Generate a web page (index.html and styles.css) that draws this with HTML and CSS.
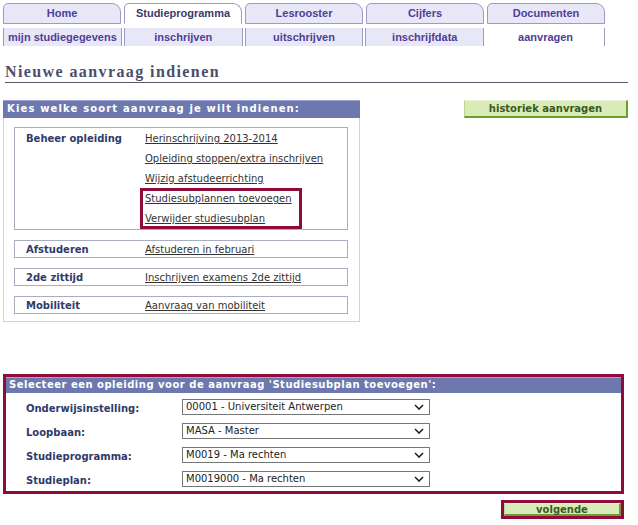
FILE: index.html
```html
<!DOCTYPE html>
<html>
<head>
<meta charset="utf-8">
<link rel="stylesheet" href="styles.css">
</head>
<body>
<nav class="tabs">
  <div class="tab">Home</div>
  <div class="tab active">Studieprogramma</div>
  <div class="tab">Lesrooster</div>
  <div class="tab">Cijfers</div>
  <div class="tab">Documenten</div>
</nav>
<nav class="subtabs">
  <div class="subtab">mijn studiegegevens</div>
  <div class="subtab">inschrijven</div>
  <div class="subtab">uitschrijven</div>
  <div class="subtab">inschrijfdata</div>
  <div class="subtab active">aanvragen</div>
</nav>

<h1 class="title">Nieuwe aanvraag indienen</h1>

<div class="content">
  <section class="panel">
    <div class="bar">Kies welke soort aanvraag je wilt indienen:</div>
    <div class="panel-body">
      <div class="group multi">
        <div class="label">Beheer opleiding</div>
        <div class="links">
          <a href="#">Herinschrijving 2013-2014</a>
          <a href="#">Opleiding stoppen/extra inschrijven</a>
          <a href="#">Wijzig afstudeerrichting</a>
          <a href="#">Studiesubplannen toevoegen</a>
          <a href="#">Verwijder studiesubplan</a>
        </div>
        <span class="highlight"></span>
      </div>
      <div class="group single">
        <div class="label">Afstuderen</div>
        <div class="links"><a href="#">Afstuderen in februari</a></div>
      </div>
      <div class="group single">
        <div class="label">2de zittijd</div>
        <div class="links"><a href="#">Inschrijven examens 2de zittijd</a></div>
      </div>
      <div class="group single">
        <div class="label">Mobiliteit</div>
        <div class="links"><a href="#">Aanvraag van mobiliteit</a></div>
      </div>
    </div>
  </section>
  <div class="btn history">historiek aanvragen</div>
</div>

<section class="select-panel">
  <div class="bar small">Selecteer een opleiding voor de aanvraag 'Studiesubplan toevoegen':</div>
  <div class="form">
    <div class="row">
      <div class="flabel">Onderwijsinstelling:</div>
      <div class="select"><span>00001 - Universiteit Antwerpen</span><svg width="10" height="6" viewBox="0 0 10 6"><path d="M1 1 L5 5 L9 1" fill="none" stroke="#222" stroke-width="1.6"/></svg></div>
    </div>
    <div class="row">
      <div class="flabel">Loopbaan:</div>
      <div class="select"><span>MASA - Master</span><svg width="10" height="6" viewBox="0 0 10 6"><path d="M1 1 L5 5 L9 1" fill="none" stroke="#222" stroke-width="1.6"/></svg></div>
    </div>
    <div class="row">
      <div class="flabel">Studieprogramma:</div>
      <div class="select"><span>M0019 - Ma rechten</span><svg width="10" height="6" viewBox="0 0 10 6"><path d="M1 1 L5 5 L9 1" fill="none" stroke="#222" stroke-width="1.6"/></svg></div>
    </div>
    <div class="row">
      <div class="flabel">Studieplan:</div>
      <div class="select"><span>M0019000 - Ma rechten</span><svg width="10" height="6" viewBox="0 0 10 6"><path d="M1 1 L5 5 L9 1" fill="none" stroke="#222" stroke-width="1.6"/></svg></div>
    </div>
  </div>
</section>

<div class="next-wrap">
  <div class="next-box"><div class="btn next">volgende</div></div>
</div>
</body>
</html>
```

FILE: styles.css
```css
* { box-sizing: border-box; }
body {
  margin: 0;
  background: #fff;
  font-family: "DejaVu Sans", Verdana, sans-serif;
  font-size: 10px;
  color: #333;
}
.tabs {
  display: flex;
  gap: 3px;
  width: 605px;
  padding: 3px 0 0 3px;
}
.tab {
  flex: 1;
  height: 21px;
  border: 1px solid #9d9ac3;
  border-radius: 5px 9px 0 0;
  background: #e8e7f8;
  font: bold 11px/19px "Liberation Sans", Arial, sans-serif;
  color: #4e3e96;
  text-align: center;
}
.tab.active {
  background: #fff;
  border-bottom-color: #fff;
  color: #3d3a6a;
}
.subtabs {
  display: flex;
  gap: 2px;
  width: 605px;
  padding-left: 3px;
  margin-top: 4px;
}
.subtab {
  flex: 1;
  height: 18px;
  background: #e8e7f8;
  border-left: 1px solid #9d9ac3;
  border-right: 1px solid #9d9ac3;
  font: bold 11px/18px "Liberation Sans", Arial, sans-serif;
  color: #4e3e96;
  text-align: center;
}
.subtab.active { background: #fff; border-left-color: #fff; }

.title {
  margin: 16px 0 0 5px;
  width: 623px;
  font: bold 16px/20px "Liberation Serif", "Times New Roman", serif;
  letter-spacing: 1.4px;
  color: #4b4e6b;
  border-bottom: 1px solid #5a5a66;
}

.content {
  display: flex;
  align-items: flex-start;
  margin-top: 17px;
  padding-left: 3px;
  width: 628px;
}
.panel { width: 357px; }
.bar {
  height: 18px;
  background: #6d79ae;
  border-top: 1px solid #9ea6cf;
  color: #fff;
  font-weight: bold;
  font-size: 10px;
  line-height: 16px;
  letter-spacing: 1.15px;
  padding-left: 4px;
  white-space: nowrap;
}
.panel-body {
  border: 1px solid #cfd2dd;
  border-top: none;
  padding: 9px 11px 7px 10px;
  display: flex;
  flex-direction: column;
  gap: 10px;
}
.group {
  position: relative;
  display: grid;
  grid-template-columns: 130px 1fr;
  border: 1px solid #a9adc2;
}
.group.multi { padding-top: 1px; line-height: 20px; }
.group.single { height: 18px; padding-top: 2px; line-height: 14px; }
.label {
  padding-left: 11px;
  font-weight: bold;
  color: #2f3a6b;
}
.links a {
  display: block;
  color: #333;
  text-decoration: underline;
  white-space: nowrap;
}
.highlight {
  position: absolute;
  left: 125px;
  top: 60px;
  width: 162px;
  height: 41px;
  border: 3px solid #8e0b3c;
}

.btn {
  background: #d9ebb6;
  border-top: 1px solid #e9f4d6;
  border-left: 1px solid #b9d690;
  border-right: 2px solid #6e9c33;
  border-bottom: 2px solid #6e9c33;
  color: #3a5a24;
  font-weight: bold;
  text-align: center;
}
.history {
  margin-left: auto;
  width: 164px;
  height: 18px;
  line-height: 15px;
}

.select-panel {
  margin: 52px 0 0 3px;
  width: 621px;
  border: 3px solid #8e0b3c;
}
.bar.small { height: 16px; line-height: 14px; letter-spacing: 0.5px; padding-left: 3px; }
.form {
  padding: 6px 0 4px 20px;
  display: flex;
  flex-direction: column;
  gap: 8px;
}
.row {
  display: flex;
  align-items: center;
}
.flabel {
  width: 156px;
  padding-top: 3px;
  font-weight: bold;
  color: #2f3a6b;
}
.select {
  display: flex;
  align-items: center;
  justify-content: space-between;
  width: 248px;
  height: 16px;
  border: 1px solid #767676;
  padding: 0 5px 0 3px;
  color: #222;
  line-height: 14px;
}

.next-wrap {
  display: flex;
  justify-content: flex-end;
  width: 624px;
  margin-top: 6px;
}
.next-box {
  width: 123px;
  height: 19px;
  border: 3px solid #8e0b3c;
}
.next {
  height: 13px;
  line-height: 11px;
}
```
